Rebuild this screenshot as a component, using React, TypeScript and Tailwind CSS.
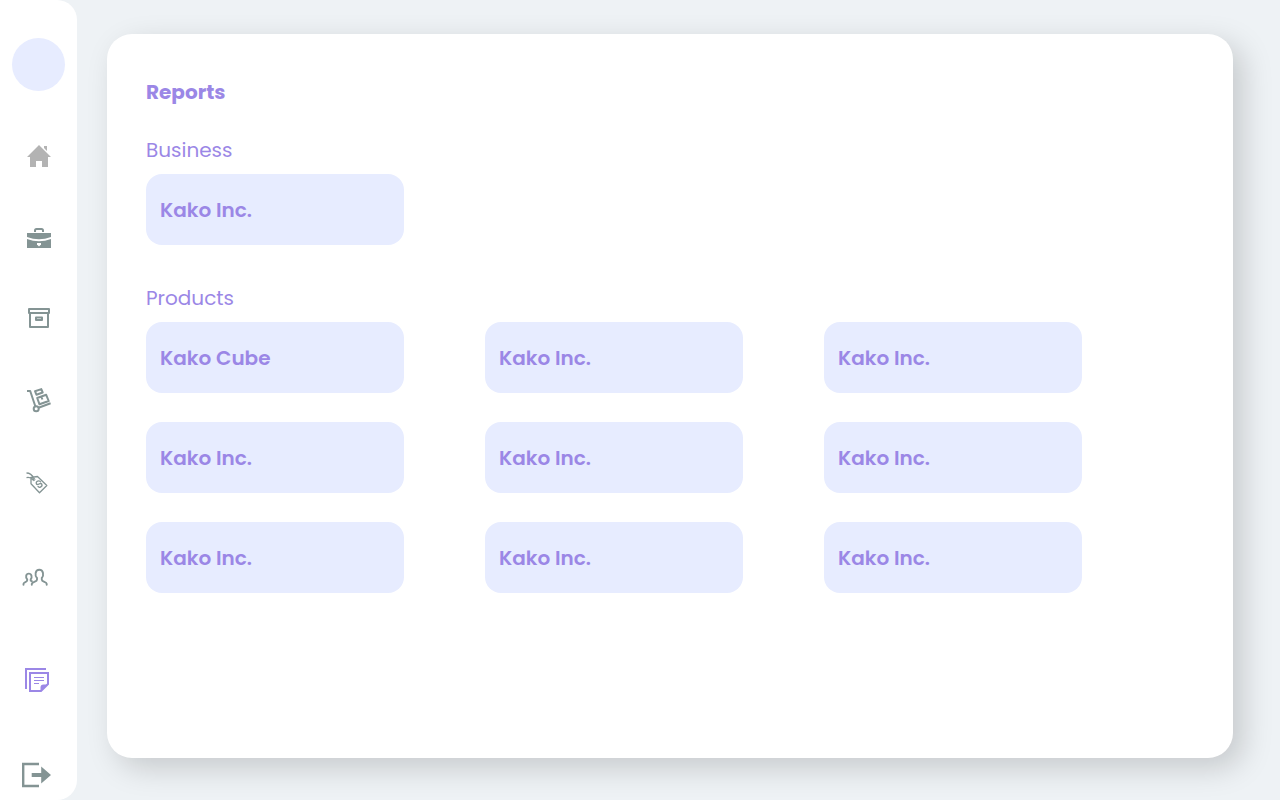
import type { ReactNode } from "react";

type NavItem = { label: string; icon: ReactNode; color: string };

function Icon({ children }: { children: ReactNode }) {
  return (
    <svg viewBox="0 0 33 32" className="block h-8 w-[33px]" fill="none" stroke="none" aria-hidden="true">
      {children}
    </svg>
  );
}

const mainItems: NavItem[] = [
  {
    label: "Home",
    color: "text-[#b3b3b3]",
    icon: (
      <Icon>
        <path fill="currentColor" d="M17 5 29 17H26V27H20V21H14V27H8V17H5ZM22 6h3v5l-3-3Z" />
      </Icon>
    ),
  },
  {
    label: "Business",
    color: "text-[#849494]",
    icon: (
      <Icon>
        <path stroke="currentColor" strokeWidth="2" d="M13 10V8.500Q13 7 14.500 7H19.500Q21 7 21 8.500V10" />
        <path fill="currentColor" d="M5 11H29V15Q17 19.500 5 15Z" />
        <path fill="currentColor" d="M5 17Q17 21.500 29 17V26H5Z" />
        <path fill="white" d="M15 21h4v1.500l-2 2-2-2Z" />
      </Icon>
    ),
  },
  {
    label: "Products",
    color: "text-[#849494]",
    icon: (
      <Icon>
        <path
          stroke="currentColor"
          strokeWidth="2"
          strokeLinejoin="round"
          d="M7 5H27V9H7ZM8 9V23H26V9M14 13.500H20V16H14Z"
        />
      </Icon>
    ),
  },
  {
    label: "Deliveries",
    color: "text-[#849494]",
    icon: (
      <Icon>
        <path
          stroke="currentColor"
          strokeWidth="2"
          strokeLinejoin="round"
          d="M5 5H8.200L13.400 20.500M16.500 21.800 28.600 17.200M13 5.200 19.300 3.100 20.700 6.500 14.400 8.700ZM15.200 12 24.200 8.800 26.700 15 17.500 18.300ZM19.400 10.600 20.400 13.500"
        />
        <circle cx="14.200" cy="22.800" r="2.500" stroke="currentColor" strokeWidth="2" />
      </Icon>
    ),
  },
  {
    label: "Prices",
    color: "text-[#849494]",
    icon: (
      <Icon>
        <path
          stroke="currentColor"
          strokeWidth="1.300"
          strokeLinejoin="round"
          d="M9 9.500 15.500 8.500 24.800 17.500 17.500 24.700 9 15.800ZM4.500 5C8 5 10 6.500 12 10.500M4.500 9.600C7 9 9.500 9.800 12 12"
        />
        <circle cx="11.700" cy="11.400" r="1.200" stroke="currentColor" />
        <path
          stroke="currentColor"
          strokeWidth="1.300"
          d="M18.800 14.200C17.500 11.800 13.300 13.200 14.400 15.900 15.600 18.200 18.200 14 19.700 16 21 18.400 17.300 20.600 15.700 18.200"
        />
      </Icon>
    ),
  },
];

const lowerItems: NavItem[] = [
  {
    label: "Customers",
    color: "text-[#849494]",
    icon: (
      <Icon>
        <path
          stroke="currentColor"
          strokeWidth="1.900"
          strokeLinecap="round"
          strokeLinejoin="round"
          d="M9.800 18.800V17.800C10 15.800 15 16 15 13.700V12C12.600 9.500 13 3.800 17.300 3.800S22 9.500 19.800 12V13.700C19.800 16 24.500 15.800 24.700 17.800V18.800M1.500 18.800V17.800C1.600 16 5.200 16.200 5.200 14.300V13.300C3.300 11.200 3.900 7.600 6.800 7.600S10.400 11.200 8.700 13.300V14.700L9.800 15.200"
        />
      </Icon>
    ),
  },
  {
    label: "Reports",
    color: "text-[#9b87e6]",
    icon: (
      <Icon>
        <path
          stroke="currentColor"
          strokeWidth="2"
          d="M24 5H4V25M8 9H26V20L19 27H8Z"
        />
        <path stroke="currentColor" d="M12 13.500H22M12 16.500H22M12 19.500H17" />
        <path fill="currentColor" d="M18.500 27V23.500Q18.500 20.500 21.500 20.500H26Z" />
      </Icon>
    ),
  },
  {
    label: "Log out",
    color: "text-[#849494]",
    icon: (
      <Icon>
        <path stroke="currentColor" strokeWidth="2.400" d="M17 2H1.200V24H17" />
        <path fill="currentColor" d="M9.700 11H19.200V4.500L29 13 19.200 21.500V15H9.700Z" />
      </Icon>
    ),
  },
];

function NavLinks({ items }: { items: NavItem[] }) {
  return (
    <>
      {items.map((item) => (
        <a key={item.label} href="#" aria-label={item.label} className={item.color}>
          {item.icon}
        </a>
      ))}
    </>
  );
}

function Section({ title, items }: { title: string; items: string[] }) {
  return (
    <section>
      <h2 className="mb-[9px] text-[20px] leading-[30px] font-normal">{title}</h2>
      <div className="grid grid-cols-[repeat(auto-fill,258px)] gap-x-[81px] gap-y-[29px]">
        {items.map((name, index) => (
          <button
            key={index}
            type="button"
            className="h-[71px] rounded-2xl bg-[#e7ecff] px-3.5 text-left text-[20px] leading-[30px] font-semibold"
          >
            {name}
          </button>
        ))}
      </div>
    </section>
  );
}

const products = ["Kako Cube", ...Array<string>(8).fill("Kako Inc.")];

export default function App() {
  return (
    <div className="flex min-h-screen bg-[#eef2f5] font-['Poppins','Inter',sans-serif] text-[#9b87e6]">
      <aside className="flex w-[77px] shrink-0 flex-col items-center rounded-r-[20px] bg-white pt-[38px]">
        <div className="size-[53px] shrink-0 rounded-full bg-[#e7ecff]" />
        <nav aria-label="Main" className="mt-[49px] flex flex-col gap-[66px]">
          <div className="flex flex-col gap-[50px]">
            <NavLinks items={mainItems} />
          </div>
          <NavLinks items={lowerItems} />
        </nav>
      </aside>
      <main className="flex grow pt-[34px] pr-[47px] pb-[42px] pl-[30px]">
        <div className="grow rounded-[25px] bg-white px-[39px] pt-[43px] pb-10 shadow-[10px_10px_30px_rgba(0,0,0,0.17)]">
          <h1 className="mb-7 text-[20px] leading-[30px] font-bold">Reports</h1>
          <div className="flex flex-col gap-[38px]">
            <Section title="Business" items={["Kako Inc."]} />
            <Section title="Products" items={products} />
          </div>
        </div>
      </main>
    </div>
  );
}
